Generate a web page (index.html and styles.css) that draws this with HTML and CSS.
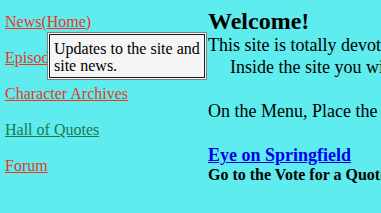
FILE: index.html
```html
<!DOCTYPE html>
<html lang="en">
<head>
  <meta charset="UTF-8">
  <title>Springfield</title>
  <link rel="stylesheet" href="styles.css">
</head>
<body>
  <div class="page">
    <!--MENU-->
    <div class="menu">
      <a href="#" class="link">News(Home)</a>
      <a href="#" class="link">Episodes</a>
      <a href="#" class="link">Character Archives</a>
      <a href="#" class="link visited">Hall of Quotes</a>
      <a href="#" class="link">Forum</a>
      <div class="tip">
        <div class="tip-inner">Updates to the site and site news.</div>
      </div>
    </div>

    <!--MAIN-->
    <div class="main">
      <h1>Welcome!</h1>
      <p class="intro">This site is totally devoted to The Simpsons.<br>
        <span class="indent">Inside the site you will find episode guides and more.</span><br>
        <br>
        On the Menu, Place the mouse over a link to see what it is.</p>
      <p class="feature"><a href="#">Eye on Springfield</a></p>
      <p class="vote">Go to the Vote for a Quote page</p>
    </div>
  </div>
</body>
</html>
```

FILE: styles.css
```css
body {
  margin: 0;
  background-color: #5eecee;
  font-family: "Liberation Serif", "Times New Roman", serif;
  color: #000000;
  overflow: hidden;
}
.page {
  display: grid;
  grid-template-columns: 200px 1fr;
  height: 213px;
}
.menu {
  position: relative;
  display: flex;
  flex-direction: column;
  align-items: flex-start;
  gap: 18px;
  padding: 13px 0 0 5px;
  font-size: 16px;
  line-height: 18px;
}
.link {
  color: #e8391f;
}
.link.visited {
  color: #1c7a4c;
}
.tip {
  position: absolute;
  left: 47px;
  top: 32px;
  width: 160px;
  box-sizing: border-box;
  border: 1px solid #808080;
  padding: 1px;
  background: #f5f5f5;
  z-index: 2;
}
.tip-inner {
  border: 1px solid #1a1a1a;
  padding: 5px 4px 3px 4px;
  font-size: 16px;
  line-height: 17px;
  color: #000000;
}
.main {
  padding-left: 8px;
  white-space: nowrap;
  overflow: hidden;
}
h1 {
  margin: 9px 0 0 0;
  font-size: 24px;
  line-height: 24px;
}
.intro {
  margin: 1px 0 0 0;
  font-size: 18px;
  line-height: 22px;
}
.indent {
  padding-left: 22px;
}
.feature {
  margin: 22px 0 0 0;
  font-size: 18px;
  line-height: 22px;
  font-weight: bold;
}
.feature a {
  color: #0000ee;
}
.vote {
  margin: 0;
  font-size: 16px;
  line-height: 18px;
  font-weight: bold;
}
```
